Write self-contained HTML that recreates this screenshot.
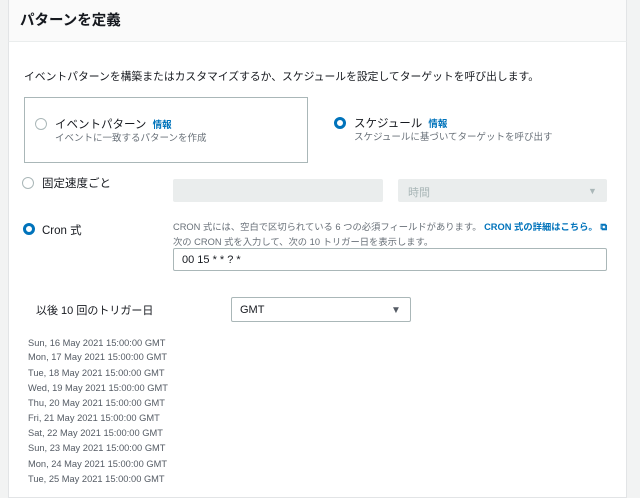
<!DOCTYPE html>
<html><head><meta charset="utf-8"><style>
*{margin:0;padding:0;box-sizing:border-box}
body{width:640px;height:480px;overflow:hidden;background:#f2f3f3;font-family:"Liberation Sans","Noto Sans CJK JP",sans-serif;color:#16191f;position:relative}
.card{position:absolute;left:8px;top:-2px;width:619px;height:500px;background:#fff;border:1px solid #e2e4e6}
.hdr{position:absolute;left:8px;top:0;width:619px;height:42px;background:#fafafa;border-bottom:1px solid #eaeded;border-left:1px solid #e2e4e6;border-right:1px solid #e2e4e6}
.a{position:absolute;white-space:nowrap}
.r{position:absolute;width:12px;height:12px;border-radius:50%;border:1.5px solid #aab7b8;background:#fff}
.r.on{border:3.5px solid #0073bb}
.link{color:#0073bb;font-weight:bold}
.g{color:#687078}
.dis{position:absolute;background:#eaeded;border-radius:2px}
.inp{position:absolute;border:1px solid #aab7b8;border-radius:2px;background:#fff}
.d{position:absolute;left:28px;font-size:9.3px;color:#545b64;white-space:nowrap}
</style></head><body>
<div class="card"></div>
<div class="hdr"></div>
<div class="a" style="left:20px;top:9px;font-size:14.5px;font-weight:bold">パターンを定義</div>
<div class="a" style="left:24px;top:68px;font-size:10.8px">イベントパターンを構築またはカスタマイズするか、スケジュールを設定してターゲットを呼び出します。</div>
<div style="position:absolute;left:24px;top:97px;width:284px;height:66px;border:1px solid #aab7b8"></div>
<div class="r" style="left:35px;top:118px"></div>
<div class="a" style="left:55px;top:116px;font-size:11.5px">イベントパターン <span class="link" style="font-size:9.5px;margin-left:3px">情報</span></div>
<div class="a g" style="left:55px;top:130px;font-size:9.5px">イベントに一致するパターンを作成</div>
<div class="r on" style="left:334px;top:117px"></div>
<div class="a" style="left:354px;top:115px;font-size:11.5px">スケジュール <span class="link" style="font-size:9.5px;margin-left:3px">情報</span></div>
<div class="a g" style="left:354px;top:129px;font-size:9.5px">スケジュールに基づいてターゲットを呼び出す</div>
<div class="r" style="left:22px;top:177px"></div>
<div class="a" style="left:42px;top:175px;font-size:11.5px">固定速度ごと</div>
<div class="dis" style="left:173px;top:179px;width:210px;height:23px"></div>
<div class="dis" style="left:398px;top:179px;width:209px;height:23px"></div>
<div class="a" style="left:408px;top:184px;font-size:11px;color:#aab7b8">時間</div>
<div class="a" style="left:588px;top:186px;font-size:9px;color:#aab7b8">▼</div>
<div class="r on" style="left:23px;top:223px"></div>
<div class="a" style="left:42px;top:222px;font-size:11.5px">Cron 式</div>
<div class="a g" style="left:173px;top:219px;font-size:9.3px">CRON 式には、空白で区切られている 6 つの必須フィールドがあります。 <span class="link">CRON 式の詳細はこちら。</span> <span class="link">⧉</span></div>
<div class="a g" style="left:173px;top:234px;font-size:9.3px">次の CRON 式を入力して、次の 10 トリガー日を表示します。</div>
<div class="inp" style="left:173px;top:248px;width:434px;height:23px"></div>
<div class="a" style="left:182px;top:254px;font-size:11px">00 15 * * ? *</div>
<div class="a" style="left:36px;top:302px;font-size:11px">以後 10 回のトリガー日</div>
<div class="inp" style="left:231px;top:297px;width:180px;height:25px"></div>
<div class="a" style="left:240px;top:304px;font-size:11px">GMT</div>
<div class="a" style="left:391px;top:305px;font-size:10px;color:#545b64">▼</div>
<div class="d" style="top:338px">Sun, 16 May 2021 15:00:00 GMT</div>
<div class="d" style="top:352px">Mon, 17 May 2021 15:00:00 GMT</div>
<div class="d" style="top:368px">Tue, 18 May 2021 15:00:00 GMT</div>
<div class="d" style="top:383px">Wed, 19 May 2021 15:00:00 GMT</div>
<div class="d" style="top:398px">Thu, 20 May 2021 15:00:00 GMT</div>
<div class="d" style="top:413px">Fri, 21 May 2021 15:00:00 GMT</div>
<div class="d" style="top:428px">Sat, 22 May 2021 15:00:00 GMT</div>
<div class="d" style="top:443px">Sun, 23 May 2021 15:00:00 GMT</div>
<div class="d" style="top:459px">Mon, 24 May 2021 15:00:00 GMT</div>
<div class="d" style="top:474px">Tue, 25 May 2021 15:00:00 GMT</div>
</body></html>
